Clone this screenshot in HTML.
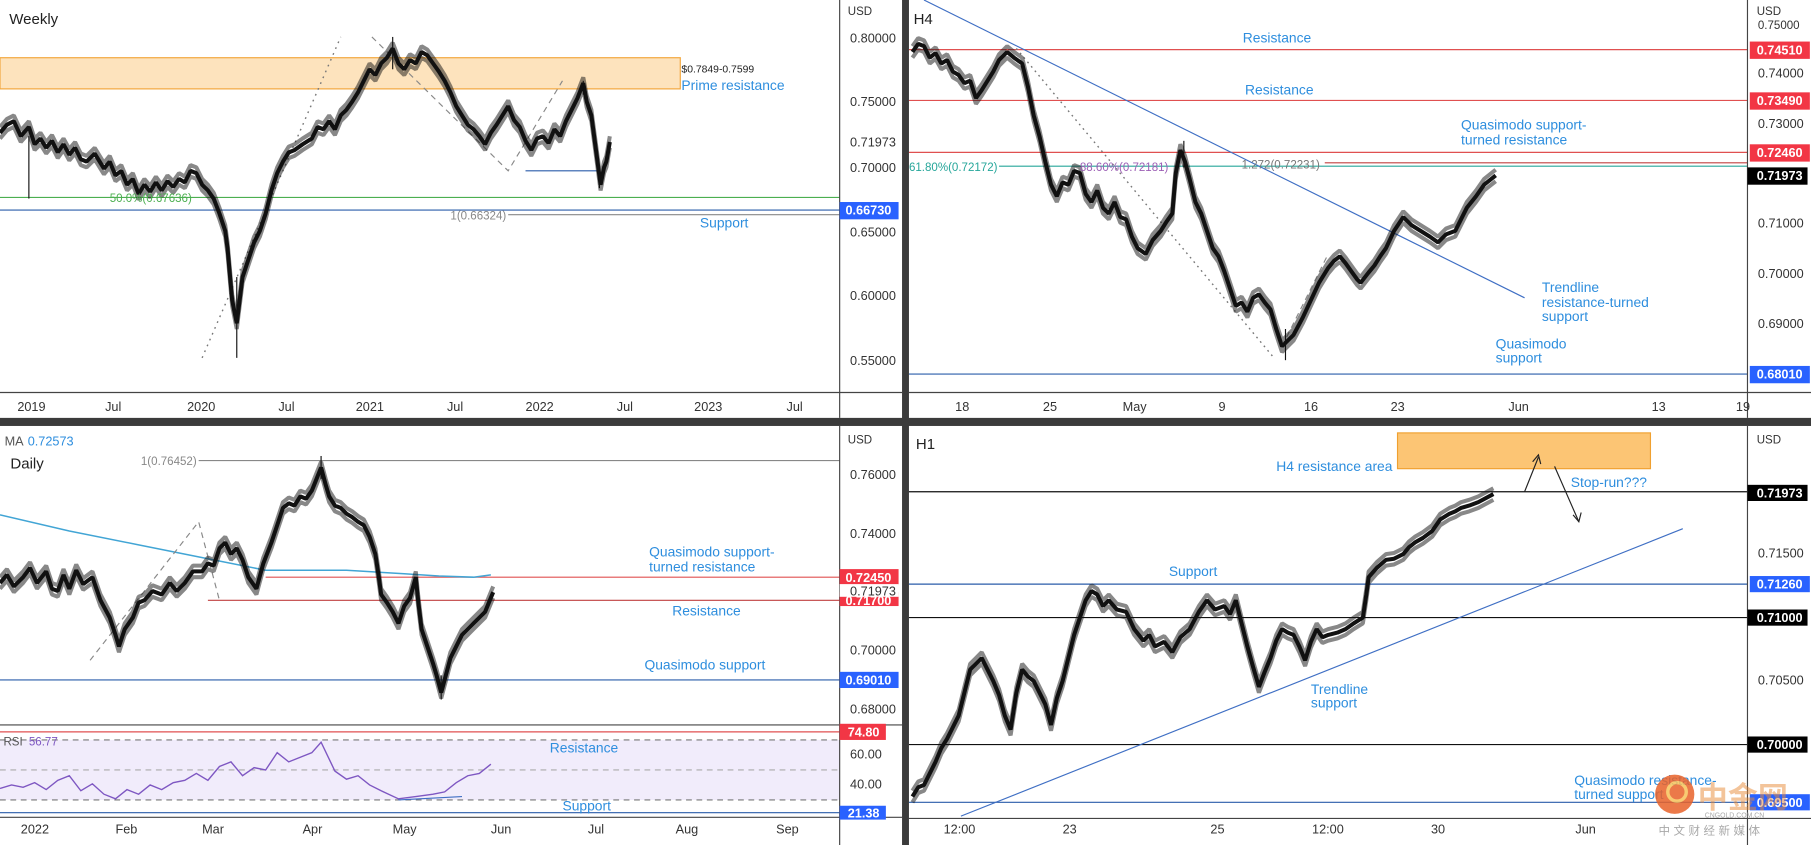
<!DOCTYPE html>
<html><head><meta charset="utf-8"><style>
html,body{margin:0;padding:0;background:#fff;overflow:hidden}
svg{display:block}
text{font-family:"Liberation Sans","Noto Sans CJK SC",sans-serif;font-size:11px}
.ax{fill:#333}
.bl{fill:#2e8ede;font-size:12px}
.lb{fill:#fff;font-weight:bold}
.pp{fill:none;stroke:#111;stroke-width:3.5;stroke-linejoin:bevel}
.wk{fill:none;stroke:#111;stroke-width:1;stroke-dasharray:1,3}
</style></head><body>
<svg width="1811" height="845" viewBox="0 0 1568 732" preserveAspectRatio="none" xmlns="http://www.w3.org/2000/svg">
<rect width="1568" height="732" fill="#fff"/>

<!-- ============ PANEL TL (Weekly) ============ -->
<rect x="0" y="50" width="589" height="27" fill="#fde3bd" stroke="#f2a53a" stroke-width="1"/>
<line x1="0" y1="171" x2="727" y2="171" stroke="#4caf50" stroke-width="1"/>
<line x1="0" y1="182" x2="727" y2="182" stroke="#2a5caa" stroke-width="1"/>
<line x1="440" y1="186" x2="727" y2="186" stroke="#888" stroke-width="1"/>
<line x1="455" y1="148" x2="518" y2="148" stroke="#2a5caa" stroke-width="1"/>
<polyline points="175,310 295,32" fill="none" stroke="#777" stroke-width="1.2" stroke-dasharray="1.5,4"/>
<polyline points="322,32 440,148 487,70" fill="none" stroke="#888" stroke-width="1" stroke-dasharray="5,4"/>
<g id="w1"><polyline class="pp" points="0,115 6,108 12,105 18,118 25,110 30,125 35,120 40,128 45,122 50,132 55,125 60,134 65,128 70,138 75,140 82,133 90,146 95,140 100,152 105,148 110,160 115,155 120,168 125,160 130,166 135,158 140,165 145,157 150,162 155,155 160,158 165,148 170,150 175,160 180,165 185,172 190,185 195,200 197,215 201,260 205,280 210,240 215,225 220,210 225,200 230,185 235,165 240,150 245,140 250,132 255,130 262,125 270,120 275,110 280,112 285,105 290,112 295,100 300,95 305,88 310,80 315,70 320,60 325,65 330,55 335,50 340,42 345,55 350,60 355,52 360,55 365,45 370,48 375,55 380,62 385,70 390,80 395,92 400,100 405,108 410,112 415,118 420,125 425,115 430,108 435,100 440,92 445,104 450,110 455,122 460,130 465,120 470,118 475,124 480,112 485,118 490,105 495,95 500,85 505,72 508,88 512,100 516,130 520,160 523,145 525,140 528,123"/></g>
<use href="#w1" transform="translate(0,-5)" opacity="0.5"/>
<use href="#w1" transform="translate(0,5)" opacity="0.5"/>
<line x1="205" y1="240" x2="205" y2="310" stroke="#111" stroke-width="1"/>
<line x1="340" y1="32" x2="340" y2="60" stroke="#111" stroke-width="1"/>
<line x1="25" y1="118" x2="25" y2="172" stroke="#111" stroke-width="1"/>
<line x1="505" y1="70" x2="505" y2="82" stroke="#111" stroke-width="1"/>
<line x1="519" y1="150" x2="519" y2="163" stroke="#111" stroke-width="1"/>
<text x="8" y="21" style="font-size:13px" fill="#222">Weekly</text>
<text x="590" y="63" style="font-size:9px" fill="#222">$0.7849-0.7599</text>
<text x="590" y="78" class="bl">Prime resistance</text>
<text x="95" y="175" style="font-size:10px" fill="#4caf50">50.0%(0.67636)</text>
<text x="390" y="190" style="font-size:10px" fill="#888">1(0.66324)</text>
<text x="606" y="197" class="bl">Support</text>
<line x1="727" y1="0" x2="727" y2="362" stroke="#444" stroke-width="1"/>
<line x1="0" y1="340" x2="781" y2="340" stroke="#444" stroke-width="1"/>
<text x="734" y="13" class="ax" style="font-size:10px">USD</text>
<text x="736" y="37" class="ax">0.80000</text>
<text x="736" y="92" class="ax">0.75000</text>
<text x="736" y="127" class="ax">0.71973</text>
<text x="736" y="149" class="ax">0.70000</text>
<rect x="727" y="175" width="51" height="15" fill="#2962ff"/>
<text x="732" y="186" class="lb">0.66730</text>
<text x="736" y="205" class="ax">0.65000</text>
<text x="736" y="260" class="ax">0.60000</text>
<text x="736" y="316" class="ax">0.55000</text>
<text x="15" y="356" class="ax">2019</text><text x="91" y="356" class="ax">Jul</text>
<text x="162" y="356" class="ax">2020</text><text x="241" y="356" class="ax">Jul</text>
<text x="308" y="356" class="ax">2021</text><text x="387" y="356" class="ax">Jul</text>
<text x="455" y="356" class="ax">2022</text><text x="534" y="356" class="ax">Jul</text>
<text x="601" y="356" class="ax">2023</text><text x="681" y="356" class="ax">Jul</text>

<!-- ============ PANEL TR (H4) ============ -->
<line x1="787" y1="43" x2="1513" y2="43" stroke="#e05050" stroke-width="1"/>
<line x1="787" y1="87" x2="1513" y2="87" stroke="#e05050" stroke-width="1"/>
<line x1="787" y1="132" x2="1513" y2="132" stroke="#e05050" stroke-width="1"/>
<line x1="1147" y1="141" x2="1513" y2="141" stroke="#c04040" stroke-width="1"/>
<line x1="865" y1="144" x2="1513" y2="144" stroke="#26a69a" stroke-width="1"/>
<line x1="787" y1="324" x2="1513" y2="324" stroke="#2a5caa" stroke-width="1"/>
<line x1="800" y1="0" x2="1320" y2="258" stroke="#3f6fc4" stroke-width="1"/>
<polyline points="880,42 1103,310" fill="none" stroke="#777" stroke-width="1.2" stroke-dasharray="1.5,3.5"/>
<polyline points="1110,300 1150,220" fill="none" stroke="#888" stroke-width="1" stroke-dasharray="5,4"/>
<g id="h4"><polyline class="pp" points="790,45 795,38 800,40 805,50 810,46 815,55 820,52 825,62 830,65 835,72 840,70 845,85 850,78 855,70 860,62 865,52 872,45 878,50 885,55 890,75 895,100 900,118 905,140 910,160 915,170 920,158 925,160 930,148 935,150 940,168 945,175 950,165 955,180 960,185 965,175 970,188 975,190 980,205 985,215 992,220 998,208 1005,200 1010,192 1015,185 1018,150 1022,130 1026,140 1030,155 1035,175 1040,185 1045,200 1050,215 1055,222 1060,235 1065,250 1070,265 1075,262 1080,270 1085,258 1090,255 1095,262 1100,268 1105,285 1110,300 1115,295 1120,290 1128,275 1135,260 1142,245 1150,232 1155,226 1160,222 1165,228 1170,235 1175,242 1178,245 1185,236 1190,230 1195,222 1200,215 1207,200 1215,188 1222,195 1230,200 1238,205 1245,210 1252,203 1260,200 1265,190 1270,180 1278,170 1285,160 1295,152"/></g>
<use href="#h4" transform="translate(0,-5)" opacity="0.5"/>
<use href="#h4" transform="translate(0,5)" opacity="0.5"/>
<line x1="1113" y1="285" x2="1113" y2="312" stroke="#111" stroke-width="1"/>
<line x1="1025" y1="122" x2="1025" y2="145" stroke="#111" stroke-width="1"/>
<text x="791" y="21" style="font-size:13px" fill="#222">H4</text>
<text x="1076" y="37" class="bl">Resistance</text>
<text x="1078" y="82" class="bl">Resistance</text>
<text x="1265" y="112" class="bl">Quasimodo support-</text>
<text x="1265" y="125" class="bl">turned resistance</text>
<text x="787" y="148" style="font-size:10px" fill="#26a69a">61.80%(0.72172)</text>
<text x="935" y="148" style="font-size:10px" fill="#9c5fb5">88.60%(0.72181)</text>
<text x="1075" y="146" style="font-size:10px" fill="#777">1.272(0.72231)</text>
<text x="1335" y="253" class="bl">Trendline</text>
<text x="1335" y="266" class="bl">resistance-turned</text>
<text x="1335" y="278" class="bl">support</text>
<text x="1295" y="302" class="bl">Quasimodo</text>
<text x="1295" y="314" class="bl">support</text>
<line x1="1513" y1="0" x2="1513" y2="362" stroke="#444" stroke-width="1"/>
<line x1="787" y1="340" x2="1568" y2="340" stroke="#444" stroke-width="1"/>
<text x="1521" y="13" class="ax" style="font-size:10px">USD</text>
<text x="1522" y="25" class="ax" style="font-size:10px">0.75000</text>
<rect x="1515" y="36" width="52" height="15" fill="#f23645"/><text x="1521" y="47" class="lb">0.74510</text>
<text x="1522" y="67" class="ax">0.74000</text>
<rect x="1515" y="80" width="52" height="15" fill="#f23645"/><text x="1521" y="91" class="lb">0.73490</text>
<text x="1522" y="111" class="ax">0.73000</text>
<rect x="1515" y="125" width="52" height="15" fill="#f23645"/><text x="1521" y="136" class="lb">0.72460</text>
<rect x="1513" y="145" width="52" height="15" fill="#000"/><text x="1521" y="156" class="lb">0.71973</text>
<text x="1522" y="197" class="ax">0.71000</text>
<text x="1522" y="241" class="ax">0.70000</text>
<text x="1522" y="284" class="ax">0.69000</text>
<rect x="1515" y="317" width="52" height="15" fill="#2962ff"/><text x="1521" y="328" class="lb">0.68010</text>
<text x="827" y="356" class="ax">18</text><text x="903" y="356" class="ax">25</text>
<text x="972" y="356" class="ax">May</text><text x="1055" y="356" class="ax">9</text>
<text x="1129" y="356" class="ax">16</text><text x="1204" y="356" class="ax">23</text>
<text x="1306" y="356" class="ax">Jun</text><text x="1430" y="356" class="ax">13</text>
<text x="1503" y="356" class="ax">19</text>

<!-- ============ DIVIDERS ============ -->
<rect x="0" y="362" width="1568" height="7" fill="#3b3b3b"/>
<rect x="781" y="0" width="6" height="732" fill="#3b3b3b"/>

<!-- ============ PANEL BL (Daily) ============ -->
<line x1="172" y1="399" x2="727" y2="399" stroke="#888" stroke-width="1"/>
<line x1="230" y1="500" x2="727" y2="500" stroke="#e05050" stroke-width="1"/>
<line x1="180" y1="520" x2="727" y2="520" stroke="#c04040" stroke-width="1"/>
<line x1="0" y1="589" x2="727" y2="589" stroke="#2a5caa" stroke-width="1"/>
<polyline points="0,446 60,460 120,472 180,484 230,494 300,494 350,497 380,499 410,500 425,498" fill="none" stroke="#42a5d5" stroke-width="1.3"/>
<polyline points="78,572 172,452 190,520" fill="none" stroke="#888" stroke-width="1" stroke-dasharray="5,4"/>
<g id="d1"><polyline class="pp" points="0,505 6,498 12,508 20,500 26,492 32,505 40,495 45,510 50,512 55,498 60,510 66,494 72,506 80,500 87,520 95,535 100,550 103,560 108,545 115,535 120,522 125,520 132,512 140,515 147,505 153,512 160,505 167,495 175,495 180,488 185,490 190,475 195,470 200,480 205,475 210,485 215,500 222,510 228,488 235,470 240,455 245,440 250,436 255,438 260,430 265,432 270,425 274,415 278,405 282,420 285,430 290,438 295,440 300,445 305,448 310,452 315,455 320,465 325,480 328,500 330,515 335,522 340,530 345,540 350,525 355,518 360,500 362,520 365,545 370,560 375,575 378,585 382,600 386,585 390,570 395,560 400,550 405,545 410,540 415,535 420,530 427,513"/></g>
<use href="#d1" transform="translate(0,-5)" opacity="0.5"/>
<use href="#d1" transform="translate(0,5)" opacity="0.5"/>
<line x1="278" y1="395" x2="278" y2="415" stroke="#111" stroke-width="1"/>
<line x1="382" y1="585" x2="382" y2="606" stroke="#111" stroke-width="1"/>
<text x="4" y="386" style="font-size:11px" fill="#555">MA</text>
<text x="24" y="386" style="font-size:11px" fill="#2e8ede">0.72573</text>
<text x="9" y="406" style="font-size:13px" fill="#222">Daily</text>
<text x="122" y="403" style="font-size:10px" fill="#888">1(0.76452)</text>
<text x="562" y="482" class="bl">Quasimodo support-</text>
<text x="562" y="495" class="bl">turned resistance</text>
<text x="582" y="533" class="bl">Resistance</text>
<text x="558" y="580" class="bl">Quasimodo support</text>
<!-- RSI -->
<line x1="0" y1="628" x2="781" y2="628" stroke="#444" stroke-width="1"/>
<line x1="0" y1="634" x2="727" y2="634" stroke="#e05050" stroke-width="1"/>
<rect x="0" y="641" width="727" height="52" fill="#f1ecfb"/>
<line x1="0" y1="641" x2="727" y2="641" stroke="#777" stroke-width="1" stroke-dasharray="5,4"/>
<line x1="0" y1="667" x2="727" y2="667" stroke="#aaa" stroke-width="1" stroke-dasharray="5,4"/>
<line x1="0" y1="693" x2="727" y2="693" stroke="#777" stroke-width="1" stroke-dasharray="5,4"/>
<line x1="0" y1="704" x2="727" y2="704" stroke="#2a5caa" stroke-width="1"/>
<polyline points="0,683 10,680 20,682 30,678 40,684 50,676 60,672 70,685 80,679 90,688 100,692 110,684 120,688 130,680 140,684 150,678 160,676 170,670 180,676 190,664 200,660 210,672 220,665 230,667 240,652 250,660 260,656 270,652 278,643 290,668 300,675 310,672 320,680 330,685 345,692 360,690 375,688 385,686 395,678 405,672 415,670 425,662" fill="none" stroke="#7e57c2" stroke-width="1.2"/>
<polyline points="345,693 400,690" fill="none" stroke="#3f6fc4" stroke-width="1"/>
<text x="3" y="646" style="font-size:10px" fill="#555">RSI</text>
<text x="25" y="646" style="font-size:10px" fill="#7e57c2">56.77</text>
<text x="476" y="652" class="bl">Resistance</text>
<text x="487" y="702" class="bl">Support</text>
<line x1="727" y1="369" x2="727" y2="732" stroke="#444" stroke-width="1"/>
<line x1="0" y1="708" x2="781" y2="708" stroke="#444" stroke-width="1"/>
<text x="734" y="384" class="ax" style="font-size:10px">USD</text>
<text x="736" y="415" class="ax">0.76000</text>
<text x="736" y="466" class="ax">0.74000</text>
<rect x="727" y="493" width="51" height="14" fill="#f23645"/><text x="732" y="504" class="lb">0.72450</text>
<rect x="727" y="513" width="51" height="12" fill="#f23645"/><text x="732" y="524" class="lb">0.71700</text>
<rect x="727" y="506" width="51" height="11" fill="#fff"/><text x="736" y="516" class="ax">0.71973</text>
<text x="736" y="567" class="ax">0.70000</text>
<rect x="727" y="582" width="51" height="14" fill="#2962ff"/><text x="732" y="593" class="lb">0.69010</text>
<text x="736" y="618" class="ax">0.68000</text>
<rect x="727" y="627" width="40" height="14" fill="#f23645"/><text x="734" y="638" class="lb">74.80</text>
<text x="736" y="657" class="ax">60.00</text>
<text x="736" y="683" class="ax">40.00</text>
<rect x="727" y="698" width="40" height="12" fill="#2962ff"/><text x="734" y="708" class="lb">21.38</text>
<text x="18" y="722" class="ax">2022</text><text x="100" y="722" class="ax">Feb</text>
<text x="175" y="722" class="ax">Mar</text><text x="262" y="722" class="ax">Apr</text>
<text x="340" y="722" class="ax">May</text><text x="425" y="722" class="ax">Jun</text>
<text x="509" y="722" class="ax">Jul</text><text x="585" y="722" class="ax">Aug</text>
<text x="672" y="722" class="ax">Sep</text>

<!-- ============ PANEL BR (H1) ============ -->
<rect x="1210" y="375" width="219" height="31" fill="#fcc574" stroke="#f0a030" stroke-width="1"/>
<line x1="787" y1="426" x2="1513" y2="426" stroke="#111" stroke-width="1"/>
<line x1="787" y1="506" x2="1513" y2="506" stroke="#2a5caa" stroke-width="1"/>
<line x1="787" y1="535" x2="1513" y2="535" stroke="#111" stroke-width="1"/>
<line x1="787" y1="645" x2="1513" y2="645" stroke="#111" stroke-width="1"/>
<line x1="787" y1="695" x2="1513" y2="695" stroke="#2a5caa" stroke-width="1"/>
<line x1="832" y1="707" x2="1457" y2="458" stroke="#3f6fc4" stroke-width="1"/>
<g id="hh"><polyline class="pp" points="790,690 795,682 800,680 805,670 810,660 815,648 820,640 825,630 830,620 835,600 840,580 845,575 850,570 855,580 860,590 865,602 870,620 875,632 880,600 885,580 890,586 895,590 900,600 905,610 910,628 915,605 920,590 925,570 930,550 935,535 940,520 945,512 950,515 955,525 960,520 967,528 975,530 982,545 990,555 995,550 1000,560 1008,556 1015,565 1022,552 1030,545 1038,530 1045,520 1052,528 1060,525 1065,532 1070,520 1075,540 1080,560 1085,578 1090,595 1095,582 1100,570 1105,555 1110,545 1115,548 1120,550 1125,560 1130,572 1135,556 1140,545 1145,552 1150,550 1158,548 1165,545 1172,540 1180,535 1183,515 1185,500 1192,492 1200,485 1207,484 1215,480 1220,474 1225,470 1232,466 1240,460 1247,450 1255,445 1260,443 1265,440 1272,438 1280,435 1293,428"/></g>
<use href="#hh" transform="translate(0,-5)" opacity="0.5"/>
<use href="#hh" transform="translate(0,5)" opacity="0.5"/>
<polyline points="1320,426 1332,396" fill="none" stroke="#222" stroke-width="1"/>
<polyline points="1327,400 1332,394 1334,402" fill="none" stroke="#222" stroke-width="1"/>
<polyline points="1346,404 1367,452" fill="none" stroke="#222" stroke-width="1"/>
<polyline points="1362,446 1367,452 1369,444" fill="none" stroke="#222" stroke-width="1"/>
<text x="793" y="389" style="font-size:13px" fill="#222">H1</text>
<text x="1105" y="408" class="bl">H4 resistance area</text>
<text x="1360" y="422" class="bl">Stop-run???</text>
<text x="1012" y="499" class="bl">Support</text>
<text x="1135" y="601" class="bl">Trendline</text>
<text x="1135" y="613" class="bl">support</text>
<text x="1363" y="680" class="bl">Quasimodo resistance-</text>
<text x="1363" y="692" class="bl">turned support</text>
<line x1="1513" y1="369" x2="1513" y2="732" stroke="#444" stroke-width="1"/>
<line x1="787" y1="709" x2="1568" y2="709" stroke="#444" stroke-width="1"/>
<text x="1521" y="384" class="ax" style="font-size:10px">USD</text>
<rect x="1513" y="420" width="52" height="14" fill="#000"/><text x="1521" y="431" class="lb">0.71973</text>
<text x="1522" y="483" class="ax">0.71500</text>
<rect x="1515" y="499" width="52" height="14" fill="#2962ff"/><text x="1521" y="510" class="lb">0.71260</text>
<rect x="1513" y="528" width="52" height="14" fill="#000"/><text x="1521" y="539" class="lb">0.71000</text>
<text x="1522" y="593" class="ax">0.70500</text>
<rect x="1513" y="638" width="52" height="14" fill="#000"/><text x="1521" y="649" class="lb">0.70000</text>
<rect x="1515" y="688" width="52" height="14" fill="#2962ff"/><text x="1521" y="699" class="lb">0.69500</text>
<text x="817" y="722" class="ax">12:00</text><text x="920" y="722" class="ax">23</text>
<text x="1048" y="722" class="ax">25</text><text x="1136" y="722" class="ax">12:00</text>
<text x="1239" y="722" class="ax">30</text><text x="1364" y="722" class="ax">Jun</text>
<!-- watermark -->
<g opacity="0.85">
<circle cx="1450" cy="688" r="17" fill="#e8622a"/>
<circle cx="1452" cy="686" r="8" fill="none" stroke="#f7c25a" stroke-width="3"/>
<text x="1470" y="700" style="font-size:26px;font-weight:bold" fill="#e88a3a" opacity="0.6">中金网</text>
<text x="1476" y="708" style="font-size:6px" fill="#999">CNGOLD.COM.CN</text>
<text x="1436" y="723" style="font-size:10px;letter-spacing:3px" fill="#999">中文财经新媒体</text>
</g>
</svg>
</body></html>
